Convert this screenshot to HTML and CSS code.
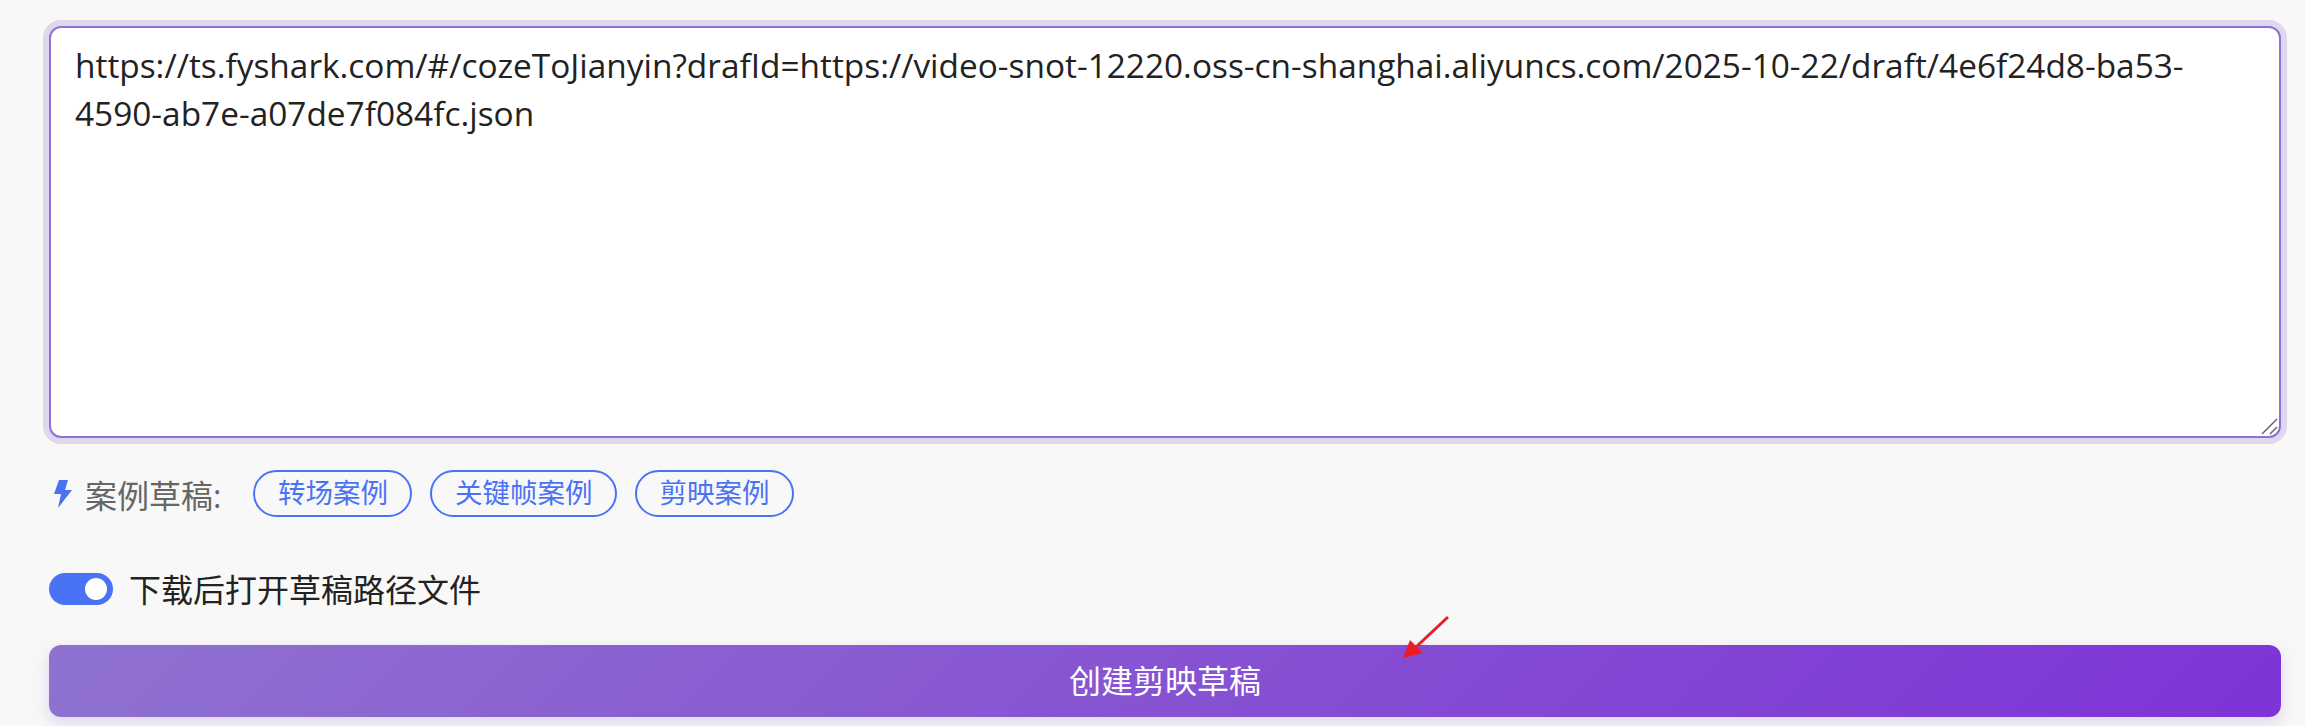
FILE: index.html
```html
<!DOCTYPE html>
<html lang="zh-CN">
<head>
    <meta charset="UTF-8">
    <meta name="viewport" content="width=device-width, initial-scale=1.0">
    <title>创建剪映草稿</title>
    <link rel="stylesheet" href="styles.css">
</head>
<body>
    <div class="container">
        <div class="input-wrap">
            <textarea class="draft-input">https://ts.fyshark.com/#/cozeToJianyin?drafId=https://video-snot-12220.oss-cn-shanghai.aliyuncs.com/2025-10-22/draft/4e6f24d8-ba53-4590-ab7e-a07de7f084fc.json</textarea>
            <svg class="grip" viewBox="0 0 17 17"><path d="M1 16 L16 1 M9 16 L16 9"/></svg>
        </div>

        <div class="examples">
            <svg class="bolt" viewBox="0 0 18 28"><path d="M5 0 L14 0 L11 10 L18 10 L4 28 L7 14 L0 14 Z"/></svg>
            <span class="examples-label">案例草稿:</span>
            <a class="chip">转场案例</a>
            <a class="chip">关键帧案例</a>
            <a class="chip">剪映案例</a>
        </div>

        <div class="switch-row">
            <span class="switch"><span class="knob"></span></span>
            <span class="switch-label">下载后打开草稿路径文件</span>
        </div>

        <button class="create-btn">创建剪映草稿</button>
    </div>

    <!-- 标注箭头 -->
    <svg class="arrow" viewBox="0 0 60 60"><path d="M50 5 L18 35" /><polygon points="5,46 12,28 25,41"/></svg>
</body>
</html>
```

FILE: styles.css
```css
* {
    margin: 0;
    padding: 0;
    box-sizing: border-box;
    font-family: 'Open Sans', 'Noto Sans CJK SC', sans-serif;
}

html, body {
    height: 100%;
    overflow: hidden;
}

body {
    background-color: #f8f8f8;
    position: relative;
}

.container {
    padding: 26px 24px 0 49px;
    display: flex;
    flex-direction: column;
}

.input-wrap {
    position: relative;
}

.draft-input {
    display: block;
    width: 100%;
    height: 412px;
    padding: 13px 24px;
    border: 2px solid #8f70d6;
    border-radius: 12px;
    box-shadow: 0 0 0 6px rgba(149, 117, 205, 0.25);
    background-color: #fff;
    color: #222;
    font-size: 33.4px;
    line-height: 48px;
    outline: none;
    resize: none;
}

.grip {
    position: absolute;
    right: 3px;
    bottom: 3px;
    width: 17px;
    height: 17px;
}

.grip path {
    stroke: #666;
    stroke-width: 1.5;
    fill: none;
}

.examples {
    display: flex;
    align-items: center;
    height: 47px;
    margin-top: 32px;
}

.bolt {
    width: 18px;
    height: 28px;
    margin-left: 5px;
    fill: #4a72f5;
}

.examples-label {
    margin-left: 13px;
    font-size: 32px;
    color: #666;
}

.chip {
    height: 47px;
    line-height: 41px;
    padding: 0 22.5px;
    margin-left: 18px;
    border: 2px solid #4a72f5;
    border-radius: 24px;
    color: #4a72f5;
    font-size: 27.5px;
}

.examples-label + .chip {
    margin-left: 32px;
}

.switch-row {
    display: flex;
    align-items: center;
    height: 32px;
    margin-top: 56px;
}

.switch {
    width: 64px;
    height: 32px;
    border-radius: 16px;
    background-color: #4a72f5;
    position: relative;
}

.knob {
    position: absolute;
    top: 5px;
    right: 6px;
    width: 22px;
    height: 22px;
    border-radius: 50%;
    background-color: #fff;
}

.switch-label {
    margin-left: 16px;
    margin-bottom: 3px;
    font-size: 32px;
    color: #222;
}

.create-btn {
    height: 72px;
    margin-top: 40px;
    padding-bottom: 4px;
    border: none;
    border-radius: 12px;
    background: linear-gradient(135deg, #8f72cf 0%, #7e33d6 100%);
    box-shadow: 0 6px 16px rgba(149, 117, 205, 0.25);
    color: #fff;
    font-size: 32px;
}

.arrow {
    position: absolute;
    left: 1398px;
    top: 612px;
    width: 60px;
    height: 60px;
}

.arrow path {
    stroke: #ed1c24;
    stroke-width: 3;
    fill: none;
}

.arrow polygon {
    fill: #ed1c24;
}
```
